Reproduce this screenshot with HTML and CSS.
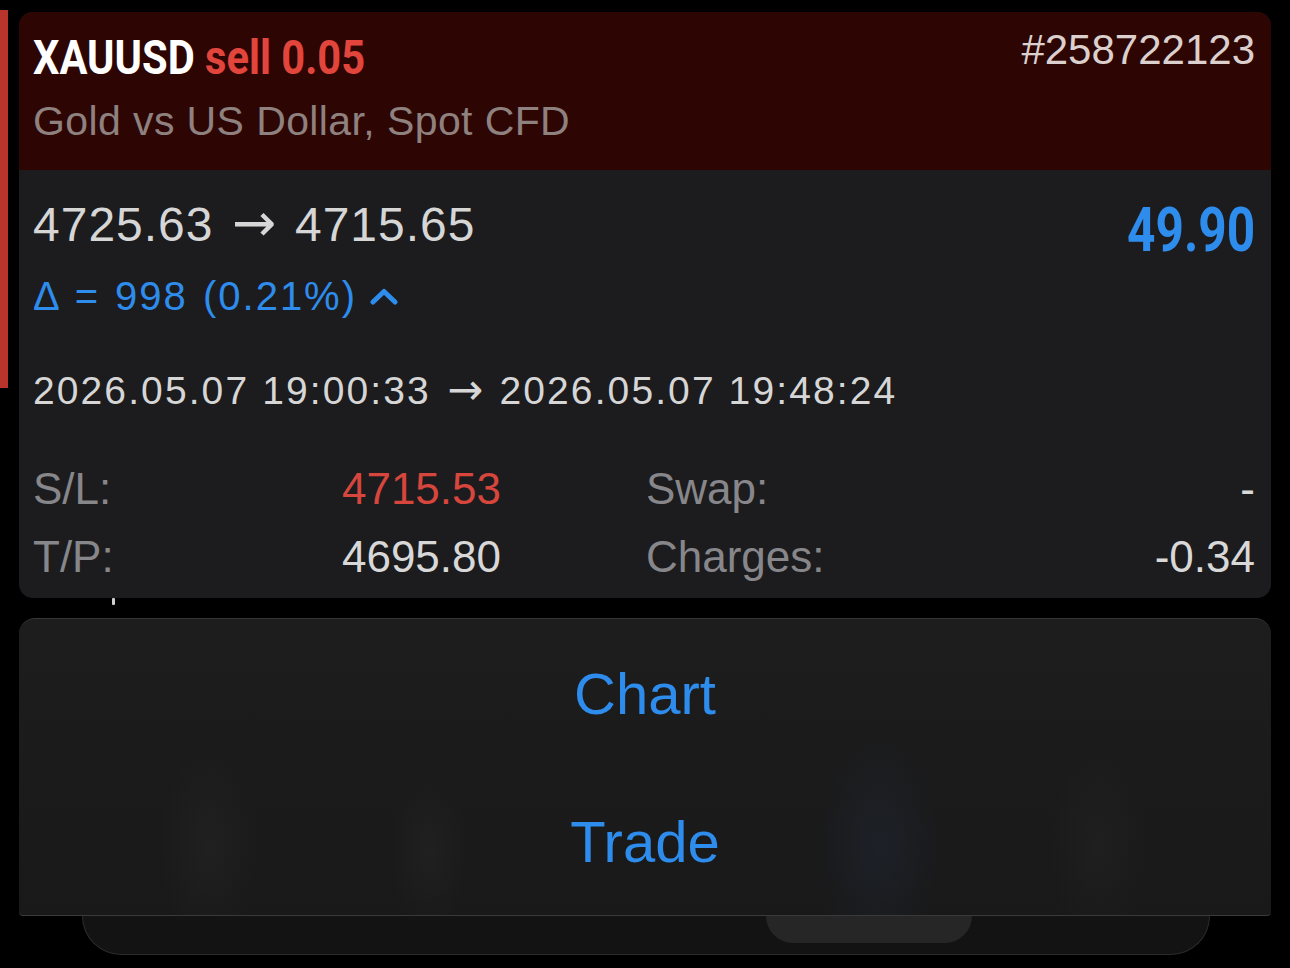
FILE: index.html
```html
<!DOCTYPE html>
<html lang="en">
<head>
<meta charset="utf-8">
<title>XAUUSD position</title>
<link rel="stylesheet" href="styles.css">
</head>
<body>
<div class="page">
  <div class="edge"><div class="redbar"></div></div>
  <main class="main">
    <section class="card">
      <header class="card-head">
        <div class="head-left">
          <div class="title"><span class="sym">XAUUSD</span> <span class="side">sell 0.05</span></div>
          <div class="desc">Gold vs US Dollar, Spot CFD</div>
        </div>
        <div class="ticket">#258722123</div>
      </header>
      <div class="card-body">
        <div class="top">
          <div class="prices">
            <div class="price">4725.63 <span class="arr">→</span> 4715.65</div>
            <div class="delta"><span>Δ = 998 (0.21%)</span>
              <svg class="chev" width="28" height="18" viewBox="0 0 28 18"><polyline points="3,15 14,4.5 25,15" fill="none" stroke="#2e8cec" stroke-width="5" stroke-linecap="round" stroke-linejoin="round"/></svg>
            </div>
          </div>
          <div class="profit">49.90</div>
        </div>
        <div class="dates">2026.05.07 19:00:33 <span class="arr">→</span> 2026.05.07 19:48:24</div>
        <div class="stats">
          <span class="lbl">S/L:</span><span class="val red">4715.53</span><span class="lbl lbl2">Swap:</span><span class="val">-</span>
          <span class="lbl">T/P:</span><span class="val">4695.80</span><span class="lbl lbl2">Charges:</span><span class="val">-0.34</span>
        </div>
      </div>
    </section>
    <div class="gap"><span class="tick"></span></div>
    <section class="sheet">
      <div class="act">Chart</div>
      <div class="act">Trade</div>
    </section>
    <div class="tabbar"><span class="bump"></span></div>
  </main>
</div>
</body>
</html>
```
FILE: styles.css
```css
html, body {
  margin: 0;
  padding: 0;
  background: #000;
}
body {
  width: 1290px;
  height: 968px;
  overflow: hidden;
  font-family: "Liberation Sans", Arial, sans-serif;
  color: #d8d8d8;
}
.page {
  display: flex;
  padding-top: 12px;
}
.edge {
  width: 19px;
  flex: none;
}
.redbar {
  width: 8px;
  height: 378px;
  margin-top: -2px;
  background: #b9342b;
}
.main {
  width: 1252px;
  display: flex;
  flex-direction: column;
}
.card {
  border-radius: 14px;
  overflow: hidden;
  background: #1c1c1e;
}
.card-head {
  background: #2d0604;
  height: 158px;
  box-sizing: border-box;
  padding: 21px 16px 0 14px;
  display: flex;
  justify-content: space-between;
  align-items: flex-start;
}
.title {
  display: inline-block;
  font-family: Roboto, "Liberation Sans", sans-serif;
  font-weight: 700;
  font-size: 49px;
  line-height: 50px;
  white-space: nowrap;
  transform: scaleX(0.85);
  transform-origin: left center;
  color: #ffffff;
}
.side {
  color: #e2453c;
}
.desc {
  margin-top: 13px;
  font-size: 41px;
  line-height: 50px;
  letter-spacing: 0.4px;
  color: #8f817f;
  white-space: nowrap;
}
.ticket {
  font-size: 42px;
  line-height: 34px;
  color: #dbd0ce;
}
.card-body {
  padding: 27px 16px 7px 14px;
}
.top {
  display: flex;
  justify-content: space-between;
  align-items: flex-start;
}
.arr {
  display: inline-block;
  width: 1em;
  text-align: center;
  font-family: "DejaVu Sans", sans-serif;
  font-size: 1.1em;
  letter-spacing: 0;
  line-height: 1;
}
.price {
  font-size: 48px;
  line-height: 56px;
  letter-spacing: 1px;
  color: #d6d6d6;
  white-space: nowrap;
}
.delta {
  margin-top: 18px;
  height: 50px;
  display: flex;
  align-items: center;
  gap: 13px;
  font-size: 40px;
  letter-spacing: 2px;
  word-spacing: 2px;
  color: #2e8cec;
  white-space: nowrap;
}
.chev {
  display: block;
}
.profit {
  padding-top: 5px;
  font-family: Roboto, "Liberation Sans", sans-serif;
  font-weight: 700;
  font-size: 62px;
  line-height: 56px;
  color: #2e8cec;
  transform: scaleX(0.8);
  transform-origin: right center;
}
.dates {
  margin-top: 45px;
  font-size: 39px;
  line-height: 50px;
  letter-spacing: 2.1px;
  color: #d6d6d6;
  white-space: nowrap;
}
.stats {
  margin-top: 39px;
  display: grid;
  grid-template-columns: 308px 160px 1fr auto;
  grid-auto-rows: 68px;
  align-items: center;
  font-size: 44px;
}
.lbl {
  color: #87878b;
}
.lbl2 {
  padding-left: 145px;
}
.val {
  text-align: right;
  color: #d8d8d8;
}
.val.red {
  color: #d7463d;
}
.gap {
  height: 20px;
}
.tick {
  display: block;
  width: 3px;
  height: 7px;
  margin-left: 93px;
  background: #cfcfcf;
  border-radius: 1px;
}
.sheet {
  height: 298px;
  border-radius: 16px 16px 4px 4px;
  border-top: 1px solid #363638;
  border-bottom: 1px solid #3a3a3a;
  box-sizing: border-box;
  background:
    radial-gradient(ellipse 50px 100px at 190px 230px, rgba(60,60,60,0.18), transparent),
    radial-gradient(ellipse 40px 80px at 410px 235px, rgba(60,60,60,0.18), transparent),
    radial-gradient(ellipse 60px 110px at 860px 230px, rgba(40,60,90,0.2), transparent),
    radial-gradient(ellipse 50px 100px at 1080px 230px, rgba(60,60,60,0.15), transparent),
    linear-gradient(#1d1d1e, #19191a);
  display: flex;
  flex-direction: column;
  position: relative;
  z-index: 1;
}
.act {
  flex: 1;
  display: flex;
  align-items: center;
  justify-content: center;
  font-size: 58px;
  color: #2e8cec;
}
.tabbar {
  position: relative;
  height: 39px;
  margin: 0 61px 0 63px;
  box-sizing: border-box;
  background: #131313;
  border: 1px solid #2b2b2b;
  border-top: none;
  border-radius: 0 0 40px 40px;
}
.bump {
  position: absolute;
  left: 683px;
  top: 0;
  width: 206px;
  height: 27px;
  background: #262626;
  border-radius: 0 0 30px 30px;
}
```
